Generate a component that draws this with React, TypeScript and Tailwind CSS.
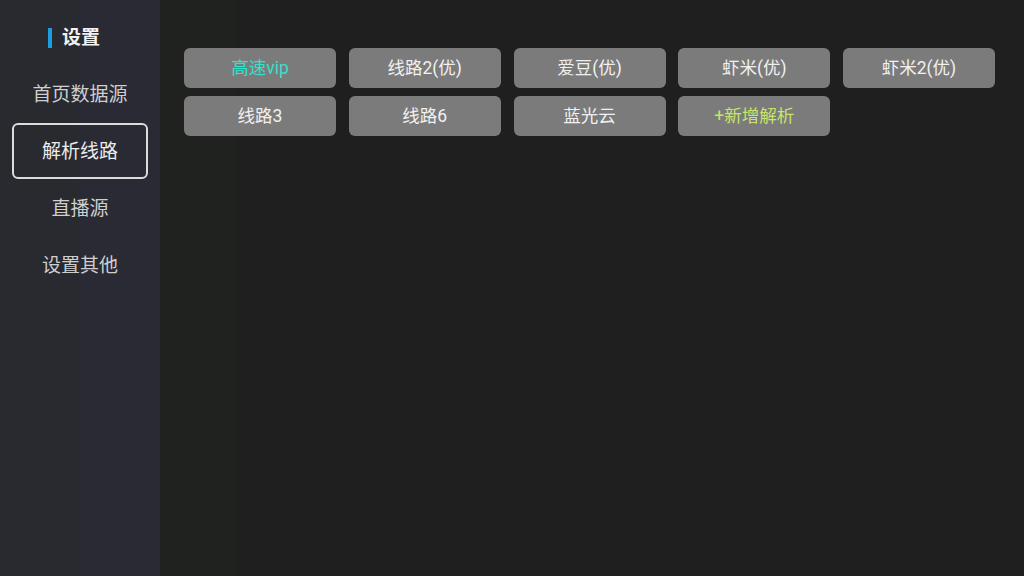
import React from "react";

const font = { fontFamily: 'Roboto, "Noto Sans CJK SC", "Noto Sans", sans-serif' };

const menu = ["首页数据源", "解析线路", "直播源", "设置其他"];

const buttons: { label: string; color: string }[] = [
  { label: "高速vip", color: "text-[#33e0cc]" },
  { label: "线路2(优)", color: "text-[#f0f0f0]" },
  { label: "爱豆(优)", color: "text-[#f0f0f0]" },
  { label: "虾米(优)", color: "text-[#f0f0f0]" },
  { label: "虾米2(优)", color: "text-[#f0f0f0]" },
  { label: "线路3", color: "text-[#f0f0f0]" },
  { label: "线路6", color: "text-[#f0f0f0]" },
  { label: "蓝光云", color: "text-[#f0f0f0]" },
  { label: "+新增解析", color: "text-[#c8e46a]" },
];

export default function App() {
  return (
    <div className="flex w-[1024px] h-[576px] overflow-hidden" style={font}>
      <aside className="w-[160px] h-full flex flex-col items-center bg-[linear-gradient(to_right,#282a30_78px,#292a33_78px)]">
        <div className="mt-[27px] h-[21px] flex items-center w-full pl-[48px]">
          <div className="w-[4px] h-[20px] bg-[#1a9ee0]" />
          <span className="ml-[10px] text-[19px] font-bold text-[#f2f2f2] leading-none">设置</span>
        </div>
        <div className="mt-[18px] flex flex-col items-center w-full">
          {menu.map((m, i) => (
            <div
              key={m}
              className={
                "w-[136px] h-[56px] flex items-center justify-center rounded-[6px] text-[19px] leading-none " +
                (i === 1
                  ? "border-2 border-[#dcdcdc] text-[#ececec]"
                  : "text-[#cfcfcf]") +
                (i > 0 ? " mt-[1px]" : "")
              }
            >
              {m}
            </div>
          ))}
        </div>
      </aside>
      <main className="flex-1 h-full bg-[linear-gradient(to_right,#20221f_76px,#1f1f1f_76px)] pl-[24px] pt-[48px]">
        <div className="grid grid-cols-[repeat(5,152px)] gap-x-[12.75px] gap-y-[7.5px]">
          {buttons.map((b) => (
            <div
              key={b.label}
              className={
                "h-[40px] rounded-[6px] bg-[#7b7b7b] flex items-center justify-center pt-[2px] text-[17.5px] leading-none " +
                b.color
              }
            >
              {b.label}
            </div>
          ))}
        </div>
      </main>
    </div>
  );
}
